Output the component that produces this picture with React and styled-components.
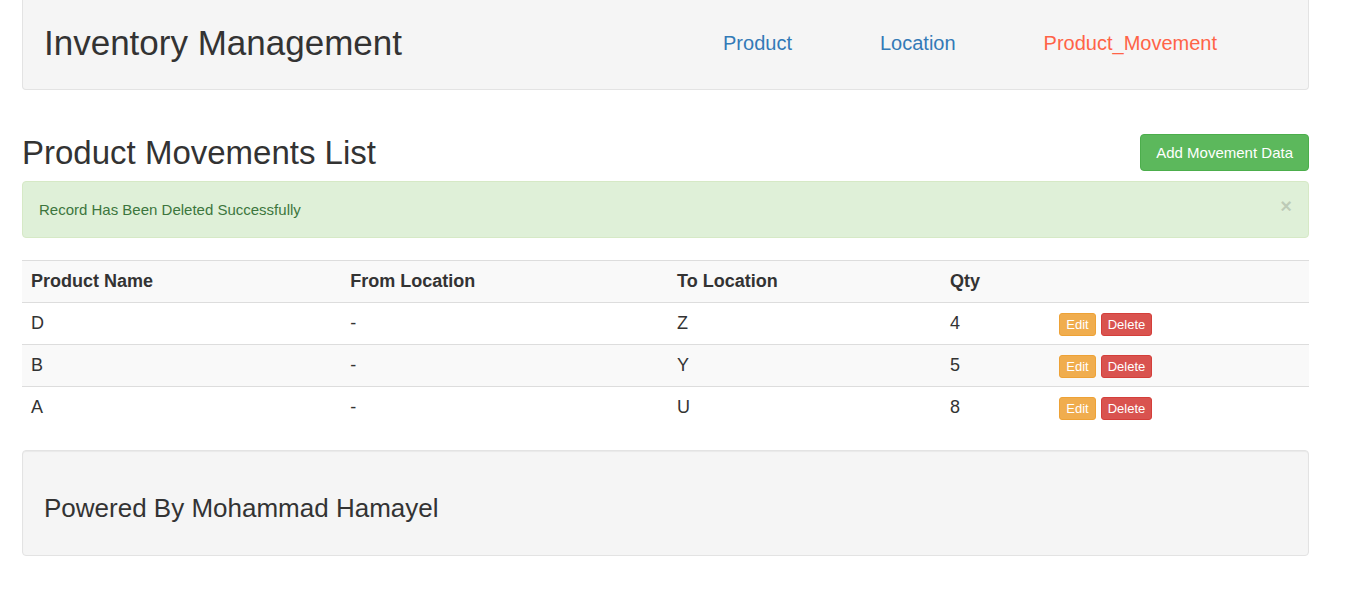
import React from "react";
import styled, { createGlobalStyle } from "styled-components";

const Global = createGlobalStyle`
  *, *::before, *::after { box-sizing: border-box; }
  body {
    margin: 0;
    background: #fff;
    color: #333;
    font: 18px/24px "Liberation Sans", Arial, sans-serif;
  }
`;

const Page = styled.div`
  padding: 0 52px 44px 22px;
`;

const Well = styled.div`
  display: flex;
  align-items: center;
  background: #f5f5f5;
  border: 1px solid #e3e3e3;
  border-radius: 4px;
  box-shadow: inset 0 1px 1px rgba(0, 0, 0, 0.05);
`;

const Header = styled(Well).attrs({ as: "header" })`
  padding: 23px 91px 26px 21px;
  justify-content: space-between;
  border-top: 0;
  border-radius: 0 0 4px 4px;
  box-shadow: none;
`;

const Footer = styled(Well).attrs({ as: "footer" })`
  margin-top: 21px;
  padding: 42px 21px 32px;
`;

const Brand = styled.h1`
  margin: 0;
  font-size: 35px;
  line-height: 40px;
  font-weight: 400;
`;

const Nav = styled.nav`
  display: flex;
  gap: 88px;
  font-size: 20px;
`;

const NavLink = styled.a`
  color: ${(p) => (p.$active ? "tomato" : "#337ab7")};
  text-decoration: none;
`;

const TitleRow = styled.div`
  display: flex;
  align-items: center;
  justify-content: space-between;
  margin: 44px 0 10px;
`;

const Title = styled.h2`
  margin: 0;
  font-size: 33px;
  line-height: 36px;
  font-weight: 400;
`;

const Credit = styled.h3`
  margin: 0;
  font-size: 26px;
  line-height: 30px;
  font-weight: 400;
`;

const tones = {
  success: ["#5cb85c", "#4cae4c"],
  warning: ["#f0ad4e", "#eea236"],
  danger: ["#d9534f", "#d43f3a"],
};

const Button = styled.button`
  height: ${(p) => (p.$small ? 23 : 37)}px;
  padding: 0 ${(p) => (p.$small ? 6 : 15)}px;
  border: 1px solid ${(p) => tones[p.$tone][1]};
  border-radius: ${(p) => (p.$small ? 3 : 4)}px;
  background: ${(p) => tones[p.$tone][0]};
  color: #fff;
  font-family: inherit;
  font-size: ${(p) => (p.$small ? 13 : 15)}px;
  white-space: nowrap;
  cursor: pointer;
`;

const Alert = styled.div`
  display: flex;
  justify-content: space-between;
  align-items: center;
  padding: 16px;
  margin-bottom: 22px;
  background: #dff0d8;
  border: 1px solid #d6e9c6;
  border-radius: 4px;
  color: #3c763d;
  font-size: 15px;
  line-height: 23px;
`;

const Close = styled.button`
  padding: 0 0 6px;
  border: 0;
  background: none;
  color: #000;
  opacity: 0.15;
  font: 700 20px/17px "Liberation Sans", Arial, sans-serif;
  text-shadow: 0 1px 0 #fff;
  cursor: pointer;
`;

const Table = styled.table`
  width: 100%;
  table-layout: fixed;
  border-collapse: collapse;
`;

const Col = styled.col`
  width: ${(p) => p.$w};
`;

const Row = styled.tr`
  height: 42px;
  border-top: 1px solid #ddd;
  background: ${(p) => (p.$shaded ? "#f9f9f9" : "#fff")};
`;

const Th = styled.th`
  padding: 0 9px 2px;
  text-align: left;
  font-weight: 700;
`;

const Td = styled.td`
  padding: 0 9px 2px;
`;

const Actions = styled.div`
  display: flex;
  gap: 5px;
  padding-top: 4px;
`;

const movements = [
  { product: "D", from: "-", to: "Z", qty: 4 },
  { product: "B", from: "-", to: "Y", qty: 5 },
  { product: "A", from: "-", to: "U", qty: 8 },
];

export default function App() {
  return (
    <Page>
      <Global />
      <Header>
        <Brand>Inventory Management</Brand>
        <Nav>
          <NavLink href="#product">Product</NavLink>
          <NavLink href="#location">Location</NavLink>
          <NavLink href="#movement" $active>Product_Movement</NavLink>
        </Nav>
      </Header>
      <main>
        <TitleRow>
          <Title>Product Movements List</Title>
          <Button type="button" $tone="success">Add Movement Data</Button>
        </TitleRow>
        <Alert role="alert">
          <span>Record Has Been Deleted Successfully</span>
          <Close type="button" aria-label="Close">×</Close>
        </Alert>
        <Table>
          <colgroup>
            <Col $w="24.8%" />
            <Col $w="25.4%" />
            <Col $w="21.2%" />
            <Col $w="8.5%" />
            <Col />
          </colgroup>
          <thead>
            <Row $shaded>
              <Th>Product Name</Th>
              <Th>From Location</Th>
              <Th>To Location</Th>
              <Th>Qty</Th>
              <Td />
            </Row>
          </thead>
          <tbody>
            {movements.map((m, i) => (
              <Row key={m.product} $shaded={i % 2 === 1}>
                <Td>{m.product}</Td>
                <Td>{m.from}</Td>
                <Td>{m.to}</Td>
                <Td>{m.qty}</Td>
                <Td>
                  <Actions>
                    <Button type="button" $small $tone="warning">Edit</Button>
                    <Button type="button" $small $tone="danger">Delete</Button>
                  </Actions>
                </Td>
              </Row>
            ))}
          </tbody>
        </Table>
      </main>
      <Footer>
        <Credit>Powered By Mohammad Hamayel</Credit>
      </Footer>
    </Page>
  );
}
